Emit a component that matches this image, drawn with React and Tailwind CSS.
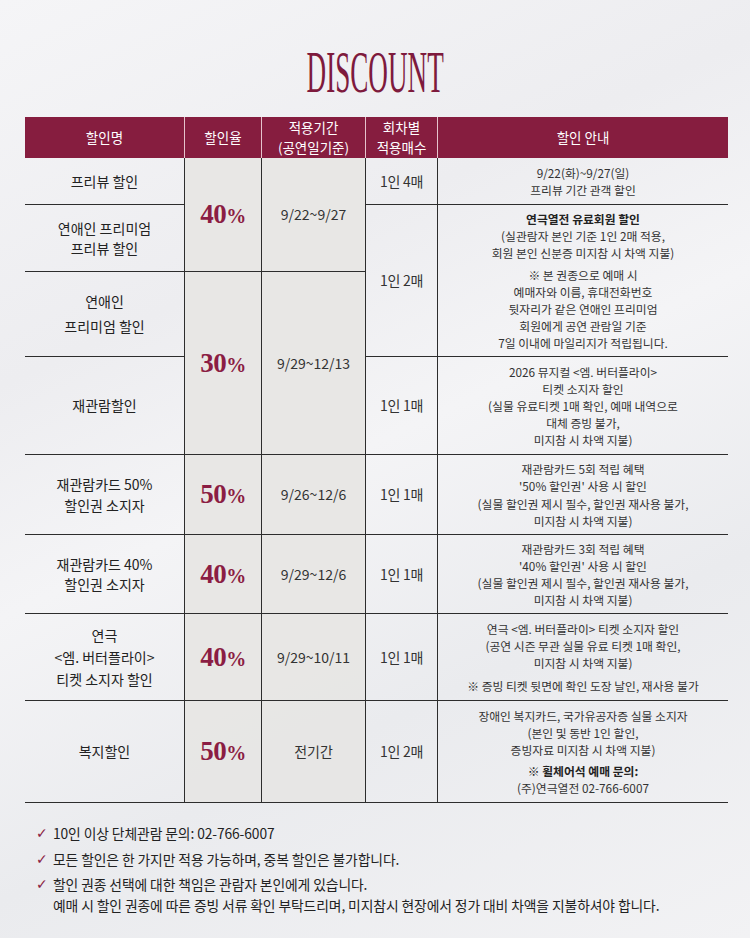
import React from "react";

const line = "border-[#2d2d2d]";

const Pct = ({ v }) => (
  <span className="font-['Liberation_Serif',serif] font-bold text-[#8b1d43] text-[27px] leading-none tracking-[-0.5px]">
    {v}
    <span className="text-[20px]">%</span>
  </span>
);

const Head = ({ children, last }) => (
  <div
    className={`flex flex-col items-center justify-center bg-[#861d3f] text-white text-[13.5px] leading-[19.6px] text-center ${
      last ? "" : "border-r-[1.5px] border-[#e6c3cc]"
    }`}
  >
    {children}
  </div>
);

const Cell = ({ children, span = "", gray, last, className = "" }) => (
  <div
    className={`flex flex-col items-center justify-center text-center border-b-[1.5px] ${line} ${
      last ? "" : "border-r-[1.5px]"
    } ${gray ? "bg-[#e7e5e3]/90" : ""} ${span} ${className}`}
  >
    {children}
  </div>
);

const Info = ({ children, span = "" }) => (
  <Cell span={span} last className="text-[11.8px] leading-[17.1px] text-[#333]">
    {children}
  </Cell>
);

const Name = ({ children, lh = "leading-[20.4px]" }) => (
  <Cell className={`text-[14px] ${lh} text-[#222]`}>{children}</Cell>
);

const Count = ({ children, span = "" }) => (
  <Cell span={span} className="text-[14px] text-[#333] tracking-[-0.3px]">
    {children}
  </Cell>
);

const Period = ({ children, span = "" }) => (
  <Cell span={span} gray className="text-[14px] text-[#333]">
    {children}
  </Cell>
);

const Rate = ({ v, span = "" }) => (
  <Cell span={span} gray>
    <Pct v={v} />
  </Cell>
);

const Note = ({ children }) => (
  <div className="flex items-start">
    <span className="w-[17px] shrink-0 font-['DejaVu_Sans',sans-serif] text-[#8b1d43] text-[14px] leading-[21px]">
      ✓
    </span>
    <div>{children}</div>
  </div>
);

export default function App() {
  return (
    <div className="min-h-[938px] w-[750px] bg-[linear-gradient(155deg,#f5f5f7_0%,#ededf0_30%,#f4f4f6_48%,#eaebee_70%,#f2f2f4_100%)] font-['Noto_Sans_CJK_KR',sans-serif] pt-[43px]">
      <div className="flex justify-center h-[59px]">
        <h1 className="font-['Liberation_Serif',serif] text-[59px] leading-none text-[#7e1a3d] scale-x-[0.46]">
          DISCOUNT
        </h1>
      </div>

      <div className="ml-[25px] mt-[15px] w-[703px] grid grid-cols-[160px_77px_104px_72px_290px] grid-rows-[41px_47px_67px_85px_98px_80px_79px_87px_102px]">
        <Head>할인명</Head>
        <Head>할인율</Head>
        <Head>
          <span>적용기간</span>
          <span>(공연일기준)</span>
        </Head>
        <Head>
          <span>회차별</span>
          <span>적용매수</span>
        </Head>
        <Head last>할인 안내</Head>

        {/* row 1 */}
        <Name>프리뷰 할인</Name>
        <Rate v="40" span="row-span-2" />
        <Period span="row-span-2">9/22~9/27</Period>
        <Count>1인 4매</Count>
        <Info>
          <p>9/22(화)~9/27(일)</p>
          <p>프리뷰 기간 관객 할인</p>
        </Info>

        {/* row 2 */}
        <Name>
          <p>연애인 프리미엄</p>
          <p>프리뷰 할인</p>
        </Name>
        <Count span="row-span-2">1인 2매</Count>
        <Info span="row-span-2">
          <p className="font-bold text-[#222]">연극열전 유료회원 할인</p>
          <p>(실관람자 본인 기준 1인 2매 적용,</p>
          <p>회원 본인 신분증 미지참 시 차액 지불)</p>
          <p className="mt-[5px]">※ 본 권종으로 예매 시</p>
          <p>예매자와 이름, 휴대전화번호</p>
          <p>뒷자리가 같은 연애인 프리미엄</p>
          <p>회원에게 공연 관람일 기준</p>
          <p>7일 이내에 마일리지가 적립됩니다.</p>
        </Info>

        {/* row 3 */}
        <Name lh="leading-[25px]">
          <p>연애인</p>
          <p>프리미엄 할인</p>
        </Name>
        <Rate v="30" span="row-span-2" />
        <Period span="row-span-2">9/29~12/13</Period>

        {/* row 4 */}
        <Name>재관람할인</Name>
        <Count>1인 1매</Count>
        <Info>
          <p>2026 뮤지컬 {"<엠. 버터플라이>"}</p>
          <p>티켓 소지자 할인</p>
          <p>(실물 유료티켓 1매 확인, 예매 내역으로</p>
          <p>대체 증빙 불가,</p>
          <p>미지참 시 차액 지불)</p>
        </Info>

        {/* row 5 */}
        <Name>
          <p>재관람카드 50%</p>
          <p>할인권 소지자</p>
        </Name>
        <Rate v="50" />
        <Period>9/26~12/6</Period>
        <Count>1인 1매</Count>
        <Info>
          <p>재관람카드 5회 적립 혜택</p>
          <p>'50% 할인권' 사용 시 할인</p>
          <p>(실물 할인권 제시 필수, 할인권 재사용 불가,</p>
          <p>미지참 시 차액 지불)</p>
        </Info>

        {/* row 6 */}
        <Name>
          <p>재관람카드 40%</p>
          <p>할인권 소지자</p>
        </Name>
        <Rate v="40" />
        <Period>9/29~12/6</Period>
        <Count>1인 1매</Count>
        <Info>
          <p>재관람카드 3회 적립 혜택</p>
          <p>'40% 할인권' 사용 시 할인</p>
          <p>(실물 할인권 제시 필수, 할인권 재사용 불가,</p>
          <p>미지참 시 차액 지불)</p>
        </Info>

        {/* row 7 */}
        <Name lh="leading-[22px]">
          <p>연극</p>
          <p>{"<엠. 버터플라이>"}</p>
          <p>티켓 소지자 할인</p>
        </Name>
        <Rate v="40" />
        <Period>9/29~10/11</Period>
        <Count>1인 1매</Count>
        <Info>
          <p>연극 {"<엠. 버터플라이>"} 티켓 소지자 할인</p>
          <p>(공연 시즌 무관 실물 유료 티켓 1매 확인,</p>
          <p>미지참 시 차액 지불)</p>
          <p className="mt-[6px]">※ 증빙 티켓 뒷면에 확인 도장 날인, 재사용 불가</p>
        </Info>

        {/* row 8 */}
        <Name>복지할인</Name>
        <Rate v="50" />
        <Period>전기간</Period>
        <Count>1인 2매</Count>
        <Info>
          <p>장애인 복지카드, 국가유공자증 실물 소지자</p>
          <p>(본인 및 동반 1인 할인,</p>
          <p>증빙자료 미지참 시 차액 지불)</p>
          <p className="mt-[3px] font-bold text-[#222]">※ 휠체어석 예매 문의:</p>
          <p>(주)연극열전 02-766-6007</p>
        </Info>
      </div>

      <div className="mt-[20px] pl-[36px] flex flex-col gap-[4.5px] text-[13.8px] leading-[21px] text-[#222] tracking-[-0.1px]">
        <Note>10인 이상 단체관람 문의: 02-766-6007</Note>
        <Note>모든 할인은 한 가지만 적용 가능하며, 중복 할인은 불가합니다.</Note>
        <Note>
          <p>할인 권종 선택에 대한 책임은 관람자 본인에게 있습니다.</p>
          <p>예매 시 할인 권종에 따른 증빙 서류 확인 부탁드리며, 미지참시 현장에서 정가 대비 차액을 지불하셔야 합니다.</p>
        </Note>
      </div>
    </div>
  );
}
